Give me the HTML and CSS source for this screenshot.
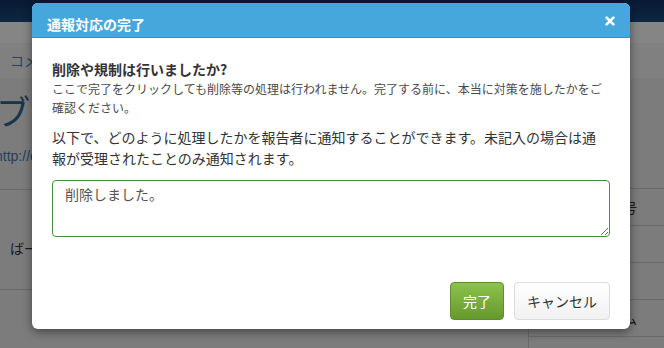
FILE: index.html
```html
<!DOCTYPE html>
<html lang="ja">
<head>
<meta charset="utf-8">
<title>通報対応の完了</title>
<link rel="stylesheet" href="styles.css">
</head>
<body>
<div class="page">
  <div class="topbar"></div>
  <div class="subbar"></div>
  <div class="crumbs"><a class="crumb-link">コメント管理</a> &gt; 通報一覧</div>
  <div class="main">
    <div class="content">
      <h1 class="blog-title">ブログ通報管理</h1>
      <div class="blog-url">http://example.jp/blog/</div>
      <div class="report-row"><span class="report-text">ばーか</span></div>
    </div>
    <aside class="side">
      <div class="side-row"></div>
      <div class="side-row">番号</div>
      <div class="side-row"></div>
      <div class="side-row"></div>
      <div class="side-row">ム</div>
    </aside>
  </div>
</div>

<div class="backdrop"></div>

<div class="modal" role="dialog">
  <div class="modal-header">
    <h3 class="modal-title">通報対応の完了</h3>
    <button class="close" type="button" aria-label="閉じる">
      <svg width="10" height="10" viewBox="0 0 10 10"><path d="M1.6 1.6L8.4 8.4M8.4 1.6L1.6 8.4" stroke="#fff" stroke-width="2.6" stroke-linecap="round"/></svg>
    </button>
  </div>
  <div class="modal-body">
    <p class="question">削除や規制は行いましたか?</p>
    <p class="note">ここで完了をクリックしても削除等の処理は行われません。完了する前に、本当に対策を施したかをご確認ください。</p>
    <p class="desc">以下で、どのように処理したかを報告者に通知することができます。未記入の場合は通報が受理されたことのみ通知されます。</p>
    <textarea class="reply">削除しました。</textarea>
  </div>
  <div class="modal-footer">
    <button class="btn btn-done" type="button">完了</button>
    <button class="btn btn-cancel" type="button">キャンセル</button>
  </div>
</div>
</body>
</html>
```

FILE: styles.css
```css
* { box-sizing: border-box; }

html, body {
  margin: 0;
  padding: 0;
  width: 664px;
  height: 348px;
  overflow: hidden;
}

body {
  font-family: "Noto Sans CJK JP", "Noto Sans", sans-serif;
  color: #333;
  background: #eeeeee;
}

/* background page */
.page {
  width: 664px;
  height: 348px;
  display: flex;
  flex-direction: column;
}

.topbar {
  height: 22px;
  background: linear-gradient(#0f3260, #1d4c82);
}

.subbar {
  height: 21px;
  background: #ffffff;
}

.crumbs {
  height: 35px;
  background: #f6f6f6;
  padding: 7px 10px;
  font-size: 14px;
  line-height: 20px;
  color: #999;
  white-space: nowrap;
}

.crumb-link { color: #3f86c4; }

.main {
  flex: 1;
  display: flex;
}

.content {
  width: 528px;
}

.blog-title {
  margin: 12px 0 0 -4px;
  font-size: 34px;
  line-height: 42px;
  font-weight: normal;
  color: #2f6890;
  white-space: nowrap;
}

.blog-url {
  margin: 14px 0 0 -5px;
  font-family: "Liberation Sans", sans-serif;
  font-size: 14px;
  line-height: 20px;
  color: #3d7fb4;
}

.report-row {
  margin-top: 23px;
  height: 101px;
  border-top: 1px solid #cccccc;
  border-bottom: 1px solid #cccccc;
  padding: 48px 10px 0;
  font-size: 14px;
  line-height: 20px;
  color: #333;
}

.side {
  flex: 1;
  border-left: 1px solid #cccccc;
  padding-top: 74px;
}

.side-row {
  height: 37px;
  border-bottom: 1px solid #cccccc;
  padding-right: 27px;
  text-align: right;
  font-size: 14px;
  line-height: 36px;
  color: #333;
}

/* overlay */
.backdrop {
  position: absolute;
  inset: 0;
  background: rgba(0, 0, 0, 0.48);
}

.modal {
  position: absolute;
  left: 32px;
  top: 3px;
  width: 598px;
  height: 326px;
  background: #fff;
  border-radius: 6px;
  box-shadow: 0 3px 10px rgba(0, 0, 0, 0.45);
  display: flex;
  flex-direction: column;
}

.modal-header {
  display: flex;
  align-items: center;
  justify-content: space-between;
  padding: 11px 15px 3px;
  background: #45a7dc;
  border-bottom: 1px solid #3a8fc2;
  border-radius: 6px 6px 0 0;
}

.modal-title {
  margin: 0;
  font-size: 14px;
  line-height: 20px;
  font-weight: bold;
  color: #fff;
}

.close {
  display: flex;
  align-items: center;
  justify-content: center;
  width: 10px;
  height: 10px;
  margin-top: -6px;
  padding: 0;
  border: 0;
  background: none;
}

.modal-body {
  padding: 21px 20px 0;
}

.question {
  margin: 0;
  font-size: 14px;
  line-height: 20px;
  font-weight: bold;
  color: #333;
}

.note {
  margin: 0;
  font-size: 12px;
  line-height: 19px;
  color: #4a4a4a;
}

.desc {
  margin: 10px 0 0;
  font-size: 14px;
  line-height: 21px;
  color: #333;
}

.reply {
  display: block;
  width: 558px;
  height: 57px;
  margin-top: 11px;
  padding: 3px 12px;
  font-family: "Noto Sans CJK JP", "Noto Sans", sans-serif;
  font-size: 14px;
  line-height: 20px;
  color: #555;
  border: 1px solid #4a8c46;
  border-radius: 4px;
  resize: vertical;
  outline: none;
}

.modal-footer {
  display: flex;
  justify-content: flex-end;
  gap: 10px;
  padding: 45px 20px 9px;
}

.btn {
  height: 38px;
  padding: 0 12px;
  font-family: "Noto Sans CJK JP", "Noto Sans", sans-serif;
  font-size: 14px;
  line-height: 36px;
  border-radius: 4px;
  cursor: pointer;
}

.btn-done {
  width: 54px;
  color: #fff;
  background: linear-gradient(#8bc34b, #66992c);
  border: 1px solid #5f8f2b;
}

.btn-cancel {
  width: 96px;
  color: #333;
  background: linear-gradient(#ffffff, #f1f1f1);
  border: 1px solid #dcdcdc;
}
```
